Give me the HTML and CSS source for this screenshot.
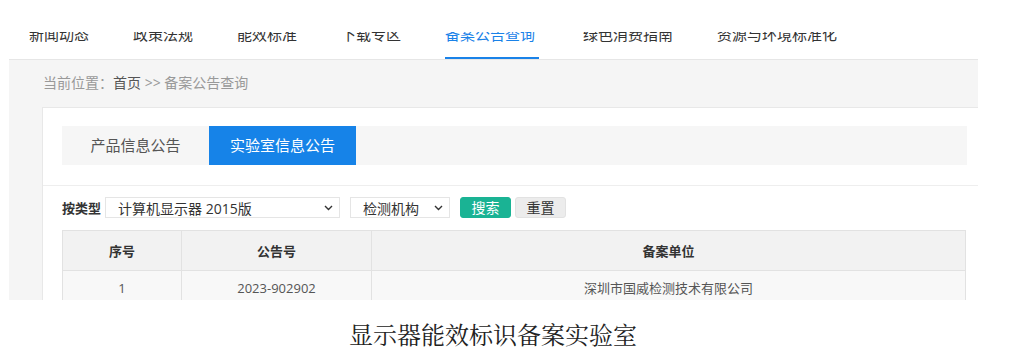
FILE: index.html
```html
<!DOCTYPE html>
<html lang="zh-CN">
<head>
  <meta charset="UTF-8">
  <title>显示器能效标识备案实验室</title>
  <link rel="stylesheet" href="styles.css">
</head>
<body>
  <div class="shot">
    <!-- 顶部导航 -->
    <div class="nav">
      <div class="nav-item">新闻动态</div>
      <div class="nav-item">政策法规</div>
      <div class="nav-item">能效标准</div>
      <div class="nav-item">下载专区</div>
      <div class="nav-item active">备案公告查询</div>
      <div class="nav-item">绿色消费指南</div>
      <div class="nav-item">资源与环境标准化</div>
    </div>

    <div class="main">
      <div class="crumb">
        <span class="crumb-label">当前位置：</span><span class="crumb-home">首页</span> &gt;&gt; 备案公告查询
      </div>

      <div class="panel">
        <div class="tabs-wrap">
          <div class="tabs">
            <div class="tab-item">产品信息公告</div>
            <div class="tab-item active">实验室信息公告</div>
          </div>
        </div>

        <div class="filter">
          <span class="filter-label">按类型</span>
          <div class="select select-type">
            <span>计算机显示器 2015版</span>
            <svg width="9" height="6" viewBox="0 0 9 6"><path d="M1 1l3.5 3.5L8 1" fill="none" stroke="#333" stroke-width="1.4"/></svg>
          </div>
          <div class="select select-org">
            <span>检测机构</span>
            <svg width="9" height="6" viewBox="0 0 9 6"><path d="M1 1l3.5 3.5L8 1" fill="none" stroke="#333" stroke-width="1.4"/></svg>
          </div>
          <button class="btn btn-search">搜索</button>
          <button class="btn btn-reset">重置</button>
        </div>

        <table class="result">
          <thead>
            <tr>
              <th class="col-no">序号</th>
              <th class="col-code">公告号</th>
              <th>备案单位</th>
            </tr>
          </thead>
          <tbody>
            <tr>
              <td>1</td>
              <td>2023-902902</td>
              <td>深圳市国威检测技术有限公司</td>
            </tr>
          </tbody>
        </table>
      </div>
    </div>
  </div>

  <p class="caption">显示器能效标识备案实验室</p>
</body>
</html>
```

FILE: styles.css
```css
/* 基础样式 */
* {
  box-sizing: border-box;
  margin: 0;
  padding: 0;
}

body {
  font-family: 'Open Sans', 'Noto Sans CJK SC', sans-serif;
  color: #333;
  background-color: #fff;
  padding-top: 32px;
}

/* 截图区域（顶部被裁切） */
.shot {
  width: 978px;
  height: 268px;
  overflow: hidden;
  background-color: #fff;
}

/* 顶部导航 */
.nav {
  display: flex;
  align-items: flex-end;
  height: 27px;
  padding-left: 29px;
  gap: 44px;
}

.nav-item {
  flex: none;
  font-size: 15px;
  line-height: 20px;
  padding: 0 0 13px;
  color: #333;
  border-bottom: 2px solid transparent;
}

.nav-item.active {
  color: #1a82e8;
  border-bottom-color: #1a82e8;
  padding-right: 4px;
}

/* 主体灰色区域 */
.main {
  margin-left: 9px;
  height: 241px;
  background-color: #f5f5f5;
  border-top: 1px solid #e6e6e6;
  padding-left: 33px;
}

.crumb {
  height: 47px;
  line-height: 46px;
  padding-left: 1px;
  font-size: 14px;
  color: #999;
}

.crumb-home {
  color: #555;
}

/* 白色面板 */
.panel {
  background-color: #fff;
  border-top: 1px solid #e8e8e8;
  border-left: 1px solid #e8e8e8;
  min-height: 200px;
}

.tabs-wrap {
  padding: 18px 11px 20px 19px;
  border-bottom: 1px solid #eee;
}

.tabs {
  display: flex;
  height: 39px;
  background-color: #f6f6f6;
}

.tab-item {
  width: 147px;
  line-height: 39px;
  text-align: center;
  font-size: 15px;
  color: #555;
}

.tab-item.active {
  background-color: #1683e8;
  color: #fff;
}

/* 筛选栏 */
.filter {
  display: flex;
  align-items: center;
  padding: 11px 0 0 19px;
  height: 32px;
}

.filter-label {
  font-size: 13px;
  font-weight: bold;
  color: #333;
  margin-right: 4px;
}

.select {
  display: flex;
  align-items: center;
  justify-content: space-between;
  height: 21px;
  border: 1px solid #e5e5e5;
  background-color: #fff;
  font-size: 14px;
  color: #333;
  padding: 0 6px 0 12px;
  margin-right: 10px;
}

.select-type {
  width: 235px;
}

.select-org {
  width: 100px;
}

.btn {
  width: 51px;
  height: 21px;
  border-radius: 3px;
  font-family: inherit;
  font-size: 14px;
  line-height: 19px;
  cursor: pointer;
}

.btn-search {
  background-color: #1ab394;
  border: 1px solid #1ab394;
  color: #fff;
  margin-right: 4px;
}

.btn-reset {
  background-color: #ececec;
  border: 1px solid #e2e2e2;
  color: #333;
}

/* 结果表格 */
.result {
  margin: 12px 0 0 19px;
  width: 904px;
  border-collapse: collapse;
  font-size: 13px;
}

.result th,
.result td {
  border: 1px solid #e2e2e2;
  text-align: center;
}

.result th {
  height: 40px;
  background-color: #f2f2f2;
  font-weight: bold;
  color: #333;
}

.result td {
  height: 34px;
  background-color: #f8f8f8;
  color: #555;
}

.col-no {
  width: 119px;
}

.col-code {
  width: 190px;
}

/* 图片说明 */
.caption {
  width: 986px;
  margin-top: 18px;
  text-align: center;
  font-family: 'Noto Serif CJK SC', 'Liberation Serif', serif;
  font-size: 24px;
  line-height: 32px;
  color: #222;
}
```
